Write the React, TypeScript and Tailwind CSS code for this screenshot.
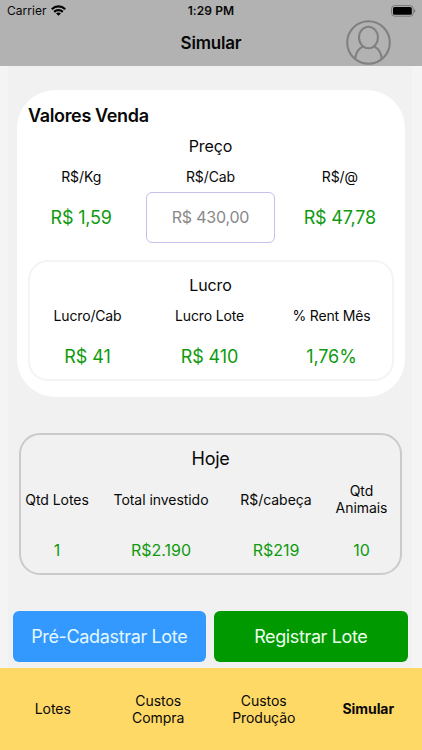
import React from "react";

const GREEN = "text-[#109a10]";

function StatusBar() {
  return (
    <div className="grid h-[22px] grid-cols-3 items-center pl-[7px] pr-[6px] text-[12px] leading-[22px]">
      <div className="flex items-center gap-[5px]">
        <span className="tracking-[0.02px]">Carrier</span>
        <svg className="-mt-[2px]" width="15" height="11" viewBox="0 0 15 11" fill="none" stroke="#000" strokeWidth="2.2">
          <path d="M0.8 4.2C4.6 0.5 10.4 0.5 14.2 4.2" />
          <path d="M3.2 6.9C5.6 4.6 9.4 4.6 11.8 6.9" />
          <path d="M7.5 10.8L5.1 8.5C6.4 7.3 8.6 7.3 9.9 8.5Z" fill="#000" stroke="none" />
        </svg>
      </div>
      <div className="-ml-px text-center font-semibold tracking-[0.1px]">1:29 PM</div>
      <div className="flex justify-end">
        <svg className="-mt-px" width="25" height="12" viewBox="0 0 25 12">
          <rect x="0.6" y="0.6" width="21.6" height="10.6" rx="3" fill="none" stroke="#777" />
          <rect x="2" y="2" width="18.8" height="7.8" rx="1.6" fill="#000" />
          <path d="M23.3 4v4c1.3-.6 1.3-3.4 0-4Z" fill="#666" />
        </svg>
      </div>
    </div>
  );
}

function Header() {
  return (
    <header className="h-[66px] bg-[#b2b2b2]">
      <StatusBar />
      <div className="-mt-[2px] grid h-[45px] grid-cols-3 items-center">
        <span />
        <h1 className="text-center text-[17px] font-semibold leading-[42px] tracking-[-0.2px]">Simular</h1>
        <div className="flex justify-end pr-[31px]">
          <svg width="45" height="45" viewBox="0 0 45 45" fill="none" stroke="#808080" strokeWidth="2.1">
            <circle cx="22.5" cy="22.5" r="21.3" />
            <ellipse cx="22.5" cy="17.5" rx="9.5" ry="10.8" />
            <path d="M9.2 39.3C9.6 33.2 12.5 28.6 17 26.4M28 26.4c4.5 2.2 7.4 6.8 7.8 12.9" />
          </svg>
        </div>
      </div>
    </header>
  );
}

function PriceColumn({ label, children }: { label: string; children: React.ReactNode }) {
  return (
    <div className="flex flex-col items-center">
      <div className="h-[30px] text-[14px] leading-[30px] tracking-[-0.1px]">{label}</div>
      {children}
    </div>
  );
}

function Profit({ label, value }: { label: string; value: string }) {
  return (
    <div className="text-center">
      <div className="text-[14px] leading-[20px] tracking-[-0.15px]">{label}</div>
      <div className={`mt-[20px] text-[18px] leading-[22px] tracking-[-0.1px] ${GREEN}`}>{value}</div>
    </div>
  );
}

function Today({ label, value }: { label: string; value: string }) {
  return (
    <div className="flex flex-col items-center text-center">
      <div className="flex h-[36px] items-center text-[14px] leading-[17px] tracking-[-0.05px]">{label}</div>
      <div className={`mt-[22px] text-[16px] leading-[22px] ${GREEN}`}>{value}</div>
    </div>
  );
}

export default function App() {
  return (
    <div className="flex h-[750px] w-[422px] flex-col overflow-hidden bg-[#f4f4f4] font-['Inter',sans-serif] text-[#080808]">
      <Header />
      <main className="ml-[8px] h-[602px] w-[404px] bg-[#f1f1f1] pt-[24px]">
        <section className="ml-[8.5px] h-[307px] w-[388px] rounded-[38px] bg-white px-[11px] pt-[15px]">
          <h2 className="ml-[0.5px] text-[18px] font-semibold leading-[22px] tracking-[-0.35px]">Valores Venda</h2>
          <div className="mt-[8px] text-center text-[16px] leading-[22px] tracking-[-0.1px]">Preço</div>
          <div className="-mx-[11px] mt-[4.5px] grid grid-cols-3">
            <PriceColumn label="R$/Kg">
              <div className={`text-[18px] leading-[52px] tracking-[-0.2px] ${GREEN}`}>R$ 1,59</div>
            </PriceColumn>
            <PriceColumn label="R$/Cab">
              <div className="h-[51px] w-[129px] rounded-[6px] border border-[#c5c0ec] text-center text-[16px] leading-[49px] tracking-[-0.2px] text-[#888]">R$ 430,00</div>
            </PriceColumn>
            <PriceColumn label="R$/@">
              <div className={`text-[18px] leading-[52px] tracking-[-0.2px] ${GREEN}`}>R$ 47,78</div>
            </PriceColumn>
          </div>
          <div className="mt-[16.5px] h-[121px] rounded-[20px] border-2 border-[#f4f4f4] pt-[12px]">
            <div className="text-center text-[16px] leading-[22px] tracking-[-0.1px]">Lucro</div>
            <div className="-ml-[3px] -mr-[1px] mt-[10px] grid grid-cols-3">
              <Profit label="Lucro/Cab" value="R$ 41" />
              <Profit label="Lucro Lote" value="R$ 410" />
              <Profit label="% Rent Mês" value="1,76%" />
            </div>
          </div>
        </section>

        <section className="ml-[11px] mt-[36px] h-[142px] w-[383px] rounded-[21px] border-2 border-[#cacaca] pt-[13px]">
          <div className="text-center text-[18px] leading-[22px] tracking-[-0.3px]">Hoje</div>
          <div className="mt-[11px] grid grid-cols-[72px_136px_94px_77px]">
            <Today label="Qtd Lotes" value="1" />
            <Today label="Total investido" value="R$2.190" />
            <Today label="R$/cabeça" value="R$219" />
            <Today label="Qtd Animais" value="10" />
          </div>
        </section>

        <div className="ml-[4.5px] mt-[36px] flex gap-[8px]">
          <button className="h-[51px] w-[193.5px] rounded-[6px] bg-[#3399ff] text-[18px] leading-[51px] tracking-[-0.35px] text-[#e4f8ff]">Pré-Cadastrar Lote</button>
          <button className="h-[51px] w-[193.5px] rounded-[6px] bg-[#009a00] text-[18px] leading-[51px] tracking-[-0.38px] text-[#ecffec]">Registrar Lote</button>
        </div>
      </main>

      <nav className="grid h-[82px] grid-cols-4 items-center bg-[#ffd966] pb-px text-center text-[14px] leading-[17px] tracking-[-0.05px]">
        <span>Lotes</span>
        <span>Custos<br />Compra</span>
        <span>Custos<br />Produção</span>
        <span className="-ml-[2px] font-bold">Simular</span>
      </nav>
    </div>
  );
}
